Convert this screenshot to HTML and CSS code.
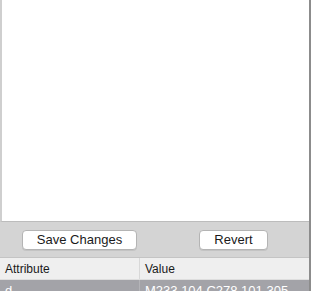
FILE: index.html
```
<!DOCTYPE html>
<html lang="en">
<head>
    <meta charset="UTF-8">
    <meta name="viewport" content="width=device-width, initial-scale=1.0">
    <title>Path Editor</title>
    <link rel="stylesheet" href="styles.css">
</head>
<body>
    <div class="panel">
        <div class="editor"></div>
        <div class="actions">
            <button class="button save">Save Changes</button>
            <button class="button revert">Revert</button>
        </div>
        <div class="table">
            <div class="row head">
                <div class="cell name">Attribute</div>
                <div class="cell value">Value</div>
            </div>
            <div class="row selected">
                <div class="cell name">d</div>
                <div class="cell value">M233 104 C278 101 305</div>
            </div>
        </div>
    </div>
</body>
</html>
```

FILE: styles.css
```
body { margin: 0; background: #d4d4d4; font-family: "Liberation Sans", Arial, sans-serif; overflow: hidden; }
.panel { width: 311px; height: 291px; display: flex; flex-direction: column; border-right: 2px solid #8c8c8c; box-sizing: border-box; }
.editor { height: 221px; background: white; border-left: 2px solid #cfcfcf; border-bottom: 1px solid #bcbcbc; flex: none; }
.actions { height: 35px; display: flex; align-items: center; padding: 0 0 0 22px; flex: none; }
.button { height: 20px; padding: 0; background: white; border: 1px solid #b4b4b4; border-radius: 4px; font-family: inherit; font-size: 13px; color: #1a1a1a; box-shadow: 0 1px 0 rgba(0, 0, 0, 0.08); }
.save { width: 115px; }
.revert { width: 69px; margin-left: 62px; }
.table { border-top: 1px solid #c4c4c4; flex: 1; overflow: hidden; }
.row { display: flex; height: 21px; align-items: center; font-size: 12px; }
.head { background: #efefef; color: #1a1a1a; border-bottom: 1px solid #dedede; }
.cell { padding-left: 5px; box-sizing: border-box; height: 100%; display: flex; align-items: center; white-space: nowrap; overflow: hidden; }
.name { width: 140px; border-right: 1px solid #d8d8d8; }
.value { flex: 1; }
.selected { background: #a3a3a8; color: white; font-size: 13px; height: 22px; align-items: flex-start; }
.selected .cell { padding-top: 3px; align-items: flex-start; }
.selected .name { border-right: 1px solid #b4b4b8; }
```
